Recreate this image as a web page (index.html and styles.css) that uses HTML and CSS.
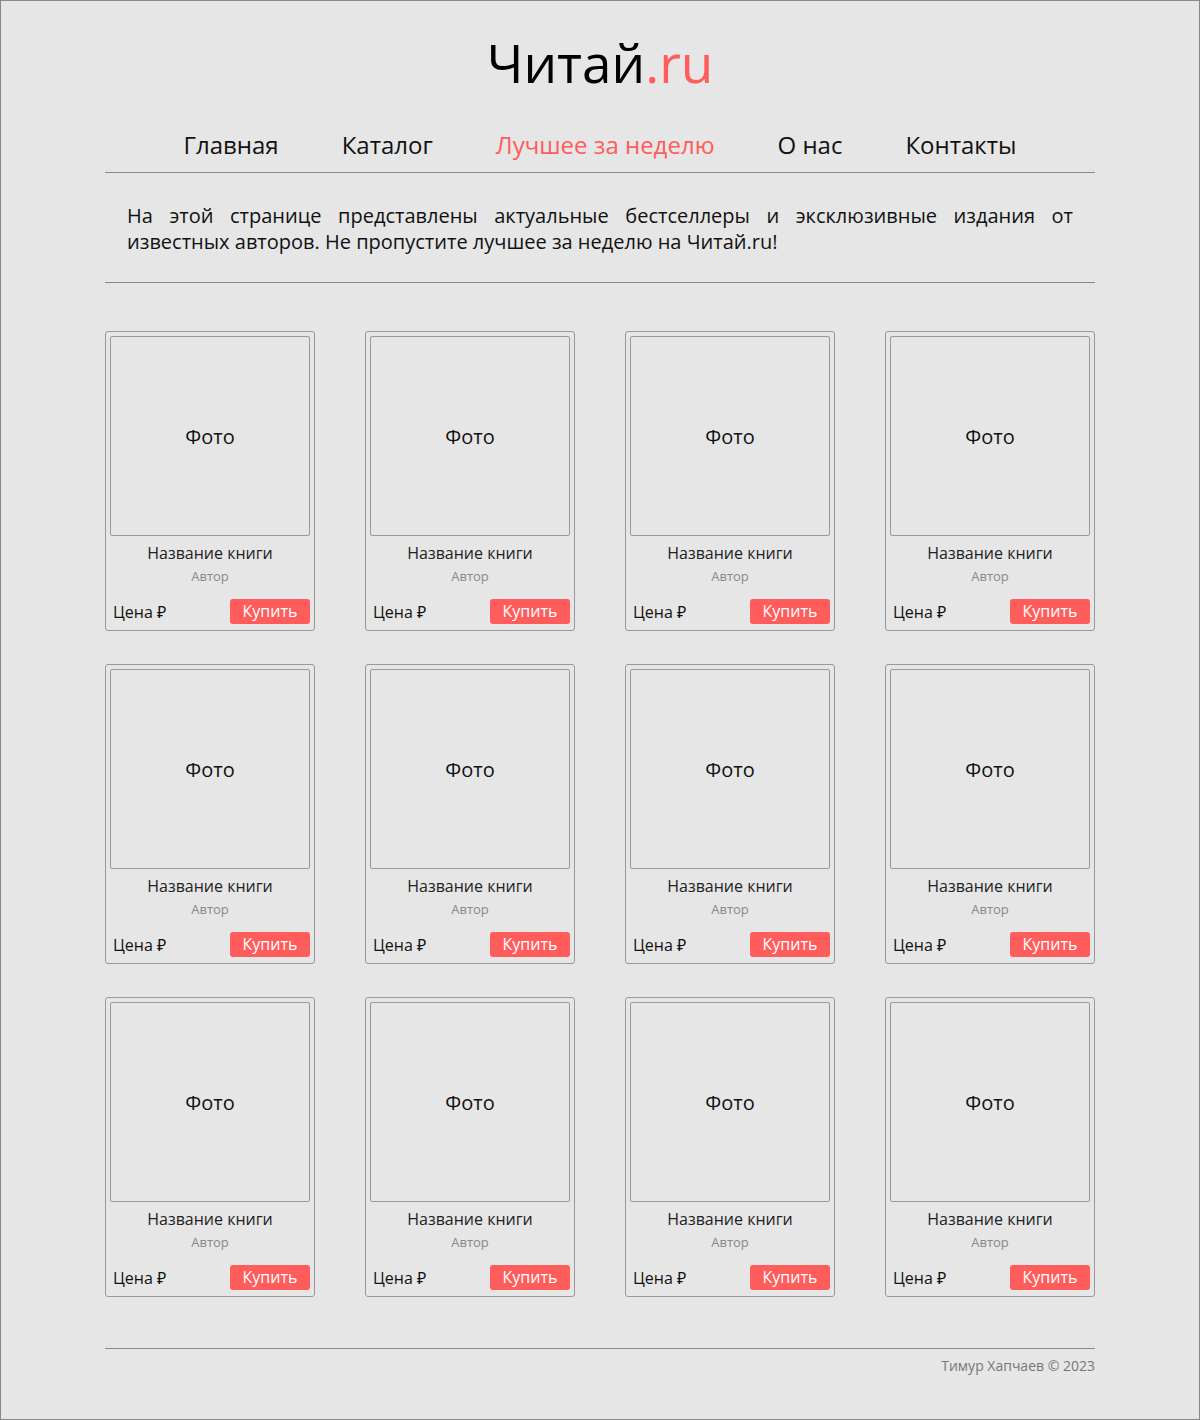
FILE: index.html
```html
<!DOCTYPE html>
<html lang="ru">
<head>
<meta charset="utf-8">
<title>Читай.ru — Лучшее за неделю</title>
<link rel="stylesheet" href="styles.css">
</head>
<body>
<div class="page">
  <header class="header">
    <h1 class="logo">Читай<span class="accent">.ru</span></h1>
    <nav class="nav">
      <a href="#" class="nav-link">Главная</a>
      <a href="#" class="nav-link">Каталог</a>
      <a href="#" class="nav-link active">Лучшее за неделю</a>
      <a href="#" class="nav-link">О нас</a>
      <a href="#" class="nav-link">Контакты</a>
    </nav>
  </header>
  <section class="intro">
    <p>На этой странице представлены актуальные бестселлеры и эксклюзивные издания от известных авторов. Не пропустите лучшее за неделю на Читай.ru!</p>
  </section>
  <main class="grid">
    <div class="card"><div class="photo">Фото</div><div class="title">Название книги</div><div class="author">Автор</div><div class="buy-row"><span class="price">Цена ₽</span><button class="buy">Купить</button></div></div>
    <div class="card"><div class="photo">Фото</div><div class="title">Название книги</div><div class="author">Автор</div><div class="buy-row"><span class="price">Цена ₽</span><button class="buy">Купить</button></div></div>
    <div class="card"><div class="photo">Фото</div><div class="title">Название книги</div><div class="author">Автор</div><div class="buy-row"><span class="price">Цена ₽</span><button class="buy">Купить</button></div></div>
    <div class="card"><div class="photo">Фото</div><div class="title">Название книги</div><div class="author">Автор</div><div class="buy-row"><span class="price">Цена ₽</span><button class="buy">Купить</button></div></div>
    <div class="card"><div class="photo">Фото</div><div class="title">Название книги</div><div class="author">Автор</div><div class="buy-row"><span class="price">Цена ₽</span><button class="buy">Купить</button></div></div>
    <div class="card"><div class="photo">Фото</div><div class="title">Название книги</div><div class="author">Автор</div><div class="buy-row"><span class="price">Цена ₽</span><button class="buy">Купить</button></div></div>
    <div class="card"><div class="photo">Фото</div><div class="title">Название книги</div><div class="author">Автор</div><div class="buy-row"><span class="price">Цена ₽</span><button class="buy">Купить</button></div></div>
    <div class="card"><div class="photo">Фото</div><div class="title">Название книги</div><div class="author">Автор</div><div class="buy-row"><span class="price">Цена ₽</span><button class="buy">Купить</button></div></div>
    <div class="card"><div class="photo">Фото</div><div class="title">Название книги</div><div class="author">Автор</div><div class="buy-row"><span class="price">Цена ₽</span><button class="buy">Купить</button></div></div>
    <div class="card"><div class="photo">Фото</div><div class="title">Название книги</div><div class="author">Автор</div><div class="buy-row"><span class="price">Цена ₽</span><button class="buy">Купить</button></div></div>
    <div class="card"><div class="photo">Фото</div><div class="title">Название книги</div><div class="author">Автор</div><div class="buy-row"><span class="price">Цена ₽</span><button class="buy">Купить</button></div></div>
    <div class="card"><div class="photo">Фото</div><div class="title">Название книги</div><div class="author">Автор</div><div class="buy-row"><span class="price">Цена ₽</span><button class="buy">Купить</button></div></div>
  </main>
  <footer class="footer">Тимур Хапчаев © 2023</footer>
</div>
</body>
</html>
```

FILE: styles.css
```css
* { box-sizing: border-box; }
html, body { margin: 0; padding: 0; }
body {
  width: 1200px;
  height: 1420px;
  background: #e6e6e6;
  border: 1px solid #888;
  font-family: "Open Sans", "Noto Sans", sans-serif;
  color: #111;
}
.page {
  width: 990px;
  margin: 0 auto;
}
.header {
  padding-top: 27px;
  border-bottom: 1px solid #888;
}
.logo {
  margin: 0;
  text-align: center;
  font-size: 53px;
  font-weight: 400;
  line-height: 70px;
  color: #000;
}
.accent { color: #ff5c5c; }
.nav {
  display: flex;
  justify-content: center;
  gap: 63px;
  margin-top: 31px;
  padding-bottom: 11px;
}
.nav-link {
  font-size: 24px;
  line-height: 32px;
  color: #111;
  text-decoration: none;
}
.nav-link.active { color: #ff5c5c; }
.intro {
  padding: 30px 22px 27px;
  border-bottom: 1px solid #888;
}
.intro p {
  margin: 0;
  font-size: 20px;
  line-height: 26px;
  text-align: justify;
}
.grid {
  display: grid;
  grid-template-columns: repeat(4, 210px);
  column-gap: 50px;
  row-gap: 33px;
  margin-top: 48px;
}
.card {
  height: 300px;
  border: 1px solid #999;
  border-radius: 3px;
  padding: 4px;
  display: flex;
  flex-direction: column;
}
.photo {
  height: 200px;
  border: 1px solid #999;
  border-radius: 2px;
  display: flex;
  align-items: center;
  justify-content: center;
  font-size: 20px;
  color: #111;
}
.title {
  margin-top: 6px;
  text-align: center;
  font-size: 16px;
  line-height: 22px;
  color: #222;
}
.author {
  margin-top: 3px;
  text-align: center;
  font-size: 13px;
  line-height: 18px;
  color: #888;
}
.buy-row {
  margin-top: auto;
  padding: 0 0 2px 3px;
  display: flex;
  align-items: center;
  justify-content: space-between;
}
.price {
  font-size: 16px;
  line-height: 22px;
  color: #111;
}
.buy {
  width: 80px;
  height: 25px;
  border: none;
  border-radius: 3px;
  background: #ff5c5c;
  color: #fff;
  font-family: "Open Sans", "Noto Sans", sans-serif;
  font-size: 16px;
  line-height: 25px;
  padding: 0;
}
.footer {
  margin-top: 51px;
  border-top: 1px solid #888;
  padding-top: 7px;
  text-align: right;
  font-size: 14px;
  line-height: 20px;
  color: #777;
}
```
